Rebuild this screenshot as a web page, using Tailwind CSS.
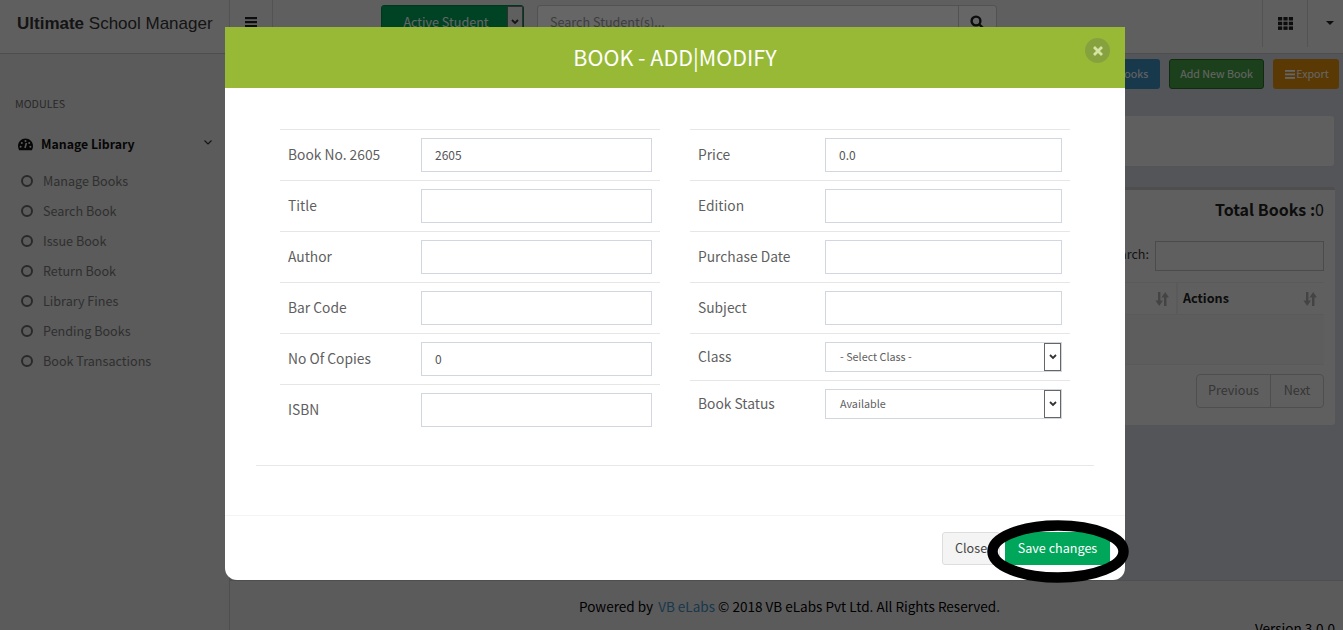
<!DOCTYPE html>
<html lang="en">
<head>
    <meta charset="UTF-8">
    <title>Ultimate School Manager</title>
    <script src="https://cdn.jsdelivr.net/npm/@tailwindcss/browser@4"></script>
</head>
<body class="bg-[#d3d4db]">
<div class="relative w-[1343px] h-[630px] overflow-hidden text-[12.6px] leading-[20px] text-[#333] font-['Noto_Sans_CJK_SC',sans-serif]">

    <!-- Top bar -->
    <header class="flex h-[54px] bg-[#eeeeee] border-b border-[#c4c4c4]">
        <div class="w-[229px] shrink-0 pl-[17px] pt-[14px] font-['Liberation_Sans',sans-serif] text-[17px] leading-[20px] text-[#333]"><b>Ultimate</b> School Manager</div>
        <div class="w-[44px] border-x border-[#cfcfcf] h-[48px] pl-[15px] pt-[16px] shrink-0">
            <svg class="w-[12px] h-[12px]" viewBox="0 0 12 12" fill="#222"><rect y="1" width="12" height="2.2"/><rect y="5" width="12" height="2.2"/><rect y="9" width="12" height="2.2"/></svg>
        </div>
        <div class="ml-[108px] mt-[5px] flex w-[143px] h-[34px] bg-[#00a65a] rounded-[3px] border border-[#008d4c]">
            <span class="flex-1 text-center pt-[6px] pl-[3px] text-white">Active Student</span>
            <span class="w-[16px] h-[32px] bg-[#eee] border border-[#777] flex items-center justify-center">
                <svg class="w-[8px] h-[6px]" viewBox="0 0 8 6" fill="none" stroke="#333" stroke-width="1.8"><path d="M1 1l3 3 3-3"/></svg>
            </span>
        </div>
        <div class="ml-[13px] mt-[5px] flex w-[460px] h-[34px] border border-[#ccc] rounded-[3px] bg-white">
            <span class="flex-1 pl-[12px] pt-[6px] text-[#999]">Search Student(s)...</span>
            <span class="w-[38px] border-l border-[#ccc] flex items-center justify-center">
                <svg class="w-[15px] h-[15px]" viewBox="0 0 15 15" fill="none" stroke="#222" stroke-width="2.4"><circle cx="6" cy="6" r="4.4"/><path d="M9.5 9.5l4.3 4.3"/></svg>
            </span>
        </div>
        <div class="ml-[265px] w-[46px] h-[47px] border-x border-[#cfcfcf] flex items-center justify-center">
            <svg class="w-[15px] h-[13px]" viewBox="0 0 15 13" fill="#222"><rect width="4.2" height="3.5"/><rect x="5.4" width="4.2" height="3.5"/><rect x="10.8" width="4.2" height="3.5"/><rect y="4.7" width="4.2" height="3.5"/><rect x="5.4" y="4.7" width="4.2" height="3.5"/><rect x="10.8" y="4.7" width="4.2" height="3.5"/><rect y="9.4" width="4.2" height="3.5"/><rect x="5.4" y="9.4" width="4.2" height="3.5"/><rect x="10.8" y="9.4" width="4.2" height="3.5"/></svg>
        </div>
        <div class="pl-[18px] pt-[21px]">
            <div class="w-0 h-0 border-x-[4px] border-x-transparent border-t-[4px] border-t-[#222]"></div>
        </div>
    </header>

    <div class="flex h-[576px]">
        <!-- Sidebar -->
        <aside class="w-[230px] shrink-0 bg-[#e3e3e3] border-r border-[#c4c4c4]">
            <div class="pl-[15px] pt-[42px] text-[10.7px] leading-[16px] text-[#666]">MODULES</div>
            <div class="flex items-center pl-[18px] pr-[17px] mt-[20px] h-[24px]">
                <svg class="w-[15px] h-[13px] mr-[8px]" viewBox="0 0 15 13"><path fill="#111" d="M7.5 0.5C3.4 0.5 0 3.8 0 8c0 1.6.5 3 1.2 4.3h12.6C14.500 11 15 9.6 15 8 15 3.800 11.6.5 7.5.5z"/><circle cx="7.5" cy="3" r="1" fill="#e3e3e3"/><circle cx="3.8" cy="5" r="1" fill="#e3e3e3"/><circle cx="11.2" cy="5" r="1" fill="#e3e3e3"/><circle cx="2.6" cy="8.8" r="1" fill="#e3e3e3"/><circle cx="12.4" cy="8.8" r="1" fill="#e3e3e3"/><path d="M7 10l1.4-5" stroke="#e3e3e3" stroke-width="1.6"/></svg>
                <span class="flex-1 text-[12.300px] font-semibold text-[#111]">Manage Library</span>
                <svg class="w-[8px] h-[5px] mb-[3px]" viewBox="0 0 8 5" fill="none" stroke="#333" stroke-width="1.2"><path d="M0.5 0.5L4 4l3.5-3.5"/></svg>
            </div>
            <ul class="mt-[10px] text-[#777]">
                <li class="flex items-center h-[30px] pl-[21px]"><span class="w-[12px] h-[12px] rounded-full border-2 border-[#666] mr-[10px]"></span>Manage Books</li>
                <li class="flex items-center h-[30px] pl-[21px]"><span class="w-[12px] h-[12px] rounded-full border-2 border-[#666] mr-[10px]"></span>Search Book</li>
                <li class="flex items-center h-[30px] pl-[21px]"><span class="w-[12px] h-[12px] rounded-full border-2 border-[#666] mr-[10px]"></span>Issue Book</li>
                <li class="flex items-center h-[30px] pl-[21px]"><span class="w-[12px] h-[12px] rounded-full border-2 border-[#666] mr-[10px]"></span>Return Book</li>
                <li class="flex items-center h-[30px] pl-[21px]"><span class="w-[12px] h-[12px] rounded-full border-2 border-[#666] mr-[10px]"></span>Library Fines</li>
                <li class="flex items-center h-[30px] pl-[21px]"><span class="w-[12px] h-[12px] rounded-full border-2 border-[#666] mr-[10px]"></span>Pending Books</li>
                <li class="flex items-center h-[30px] pl-[21px]"><span class="w-[12px] h-[12px] rounded-full border-2 border-[#666] mr-[10px]"></span>Book Transactions</li>
            </ul>
        </aside>

        <div class="flex-1 flex flex-col">
            <!-- Main content -->
            <main class="h-[526px] shrink-0 pl-[10px] pr-[9px]">
                <div class="flex justify-end gap-[9px] mt-[5px] mr-[-5px] text-[10.700px] text-white">
                    <span class="w-[100px] h-[30px] rounded-[3px] bg-[#3c8dbc] flex items-center justify-center pl-[4px]">Manage Books</span>
                    <span class="w-[95px] h-[30px] rounded-[3px] bg-[#479f47] border border-[#2d6a2d] flex items-center justify-center">Add New Book</span>
                    <span class="w-[66px] h-[30px] rounded-[3px] bg-[#e08e0b] flex items-center justify-center pl-[2px]">
                        <svg class="w-[10px] h-[9px] mr-[1px]" viewBox="0 0 10 9" fill="#fff"><rect width="10" height="1.8"/><rect y="3.5" width="10" height="1.8"/><rect y="7" width="10" height="1.8"/></svg>Export
                    </span>
                </div>
                <div class="h-[50px] mt-[27px] bg-[#eeeeee] rounded-[3px]"></div>
                <section class="h-[238px] mt-[21px] mr-[-1px] bg-[#eeeeee] border-t-[3px] border-[#c2c2c6] rounded-[3px] pr-[11px]">
                    <div class="text-right pt-[7px] text-[16px] leading-[24px] text-[#222]"><b>Total Books :</b><span class="font-normal">0</span></div>
                    <div class="flex justify-end items-center mt-[20px] gap-[6px]">
                        <span class="pb-[4px]">Search:</span>
                        <span class="w-[169px] h-[30px] border border-[#bbb] bg-[#eeeeee]"></span>
                    </div>
                    <div class="flex mt-[11px] h-[33px] border-y border-[#e2e2e2]">
                        <div class="flex-1 flex items-center justify-end pr-[7px] border-r-2 border-[#e2e2e2]">
                            <svg class="w-[14px] h-[14px]" viewBox="0 0 14 13" preserveAspectRatio="none" fill="#aaa"><path d="M3 0h2.4v8H8L4.2 13 .4 8H3zM9 5h-2.6L10.200 0 14 5h-2.500v8H9z"/></svg>
                        </div>
                        <div class="w-[146px] flex items-center justify-between pl-[5px] pr-[7px] font-bold text-[#222]"><span class="pb-[2px]">Actions</span>
                            <svg class="w-[14px] h-[14px]" viewBox="0 0 14 13" preserveAspectRatio="none" fill="#aaa"><path d="M3 0h2.4v8H8L4.2 13 .4 8H3zM9 5h-2.6L10.200 0 14 5h-2.500v8H9z"/></svg>
                        </div>
                    </div>
                    <div class="h-[50px] bg-[#e8e8e8] border-b border-[#e2e2e2]"></div>
                    <div class="flex justify-end mt-[9px]">
                        <div class="flex h-[34px] border border-[#c4c4c4] rounded-[4px] text-[#888]">
                            <span class="w-[74px] flex items-center justify-center border-r border-[#c4c4c4] pb-[2px]">Previous</span>
                            <span class="w-[52px] flex items-center justify-center pb-[2px]">Next</span>
                        </div>
                    </div>
                </section>
            </main>

            <!-- Footer -->
            <footer class="h-[50px] bg-[#e3e3e5] border-t border-[#c4c4c4] pt-[15px] text-[13.550px] text-black">
                <p class="pl-[349px] whitespace-nowrap">Powered by <span class="ml-[2px] text-[#3c8dbc]">VB eLabs</span> © 2018 VB eLabs Pvt Ltd. All Rights Reserved.</p>
                <p class="pl-[1025px] mt-[2px] whitespace-nowrap">Version 3.0.0</p>
            </footer>
        </div>
    </div>

    <!-- Modal backdrop -->
    <div class="absolute inset-0 bg-black/60"></div>

    <!-- Modal -->
    <div class="absolute left-[225px] top-[27px] w-[900px] h-[553px] bg-white rounded-b-[12px] flex flex-col">
        <div class="relative h-[61px] shrink-0 bg-[#97b936] flex items-center justify-center pb-[2px] text-white text-[21.500px] leading-[30px]">
            BOOK - ADD|MODIFY
            <span class="absolute right-[15px] top-[11px] w-[25px] h-[25px] rounded-full bg-[#86a23f] flex items-center justify-center">
                <svg class="w-[10px] h-[10px]" viewBox="0 0 10 10" stroke="#d5e3a3" stroke-width="2.800"><path d="M1 1l8 8M9 1l-8 8"/></svg>
            </span>
        </div>

        <div class="h-[378px] mx-[31px] border-b border-[#e8e8e8] pt-[41px] shrink-0 flex">
            <!-- Left column -->
            <div class="ml-[24px] w-[380px]">
                <div class="flex items-center h-[51px] border-t border-[#e6e6e6] pl-[8px] text-[13.800px] text-[#5f5f5f]"><span class="w-[133px] pb-[2px]">Book No. 2605</span><input value="2605" class="w-[231px] h-[34px] border border-[#d2d6de] px-[13px] pb-[2px] text-[12px] text-[#555]"></div>
                <div class="flex items-center h-[51px] border-t border-[#e6e6e6] pl-[8px] text-[13.800px] text-[#5f5f5f]"><span class="w-[133px] pb-[2px]">Title</span><input class="w-[231px] h-[34px] border border-[#d2d6de] px-[13px] text-[12px]"></div>
                <div class="flex items-center h-[51px] border-t border-[#e6e6e6] pl-[8px] text-[13.800px] text-[#5f5f5f]"><span class="w-[133px] pb-[2px]">Author</span><input class="w-[231px] h-[34px] border border-[#d2d6de] px-[13px] text-[12px]"></div>
                <div class="flex items-center h-[51px] border-t border-[#e6e6e6] pl-[8px] text-[13.800px] text-[#5f5f5f]"><span class="w-[133px] pb-[2px]">Bar Code</span><input class="w-[231px] h-[34px] border border-[#d2d6de] px-[13px] text-[12px]"></div>
                <div class="flex items-center h-[51px] border-t border-[#e6e6e6] pl-[8px] text-[13.800px] text-[#5f5f5f]"><span class="w-[133px] pb-[2px]">No Of Copies</span><input value="0" class="w-[231px] h-[34px] border border-[#d2d6de] px-[13px] pb-[2px] text-[12px] text-[#555]"></div>
                <div class="flex items-center h-[51px] border-t border-[#e6e6e6] pl-[8px] text-[13.800px] text-[#5f5f5f]"><span class="w-[133px] pb-[2px]">ISBN</span><input class="w-[231px] h-[34px] border border-[#d2d6de] px-[13px] text-[12px]"></div>
            </div>
            <!-- Right column -->
            <div class="ml-[30px] w-[380px]">
                <div class="flex items-center h-[51px] border-t border-[#e6e6e6] pl-[8px] text-[13.800px] text-[#5f5f5f]"><span class="w-[127px] pb-[2px]">Price</span><input value="0.0" class="w-[237px] h-[34px] border border-[#d2d6de] px-[13px] pb-[2px] text-[12px] text-[#555]"></div>
                <div class="flex items-center h-[51px] border-t border-[#e6e6e6] pl-[8px] text-[13.800px] text-[#5f5f5f]"><span class="w-[127px] pb-[2px]">Edition</span><input class="w-[237px] h-[34px] border border-[#d2d6de] px-[13px] text-[12px]"></div>
                <div class="flex items-center h-[51px] border-t border-[#e6e6e6] pl-[8px] text-[13.800px] text-[#5f5f5f]"><span class="w-[127px] pb-[2px]">Purchase Date</span><input class="w-[237px] h-[34px] border border-[#d2d6de] px-[13px] text-[12px]"></div>
                <div class="flex items-center h-[51px] border-t border-[#e6e6e6] pl-[8px] text-[13.800px] text-[#5f5f5f]"><span class="w-[127px] pb-[2px]">Subject</span><input class="w-[237px] h-[34px] border border-[#d2d6de] px-[13px] text-[12px]"></div>
                <div class="flex items-center h-[47px] border-t border-[#e6e6e6] pl-[8px] text-[13.800px] text-[#5f5f5f]"><span class="w-[127px] pb-[2px]">Class</span>
                    <div class="relative w-[237px] h-[30px] border border-[#d2d6de] pl-[14px] pb-[2px] flex items-center text-[10.800px]">- Select Class -
                        <span class="absolute right-0 top-0 w-[17px] h-[28px] border border-[#666] flex items-center justify-center"><svg class="w-[8px] h-[6px]" viewBox="0 0 8 6" fill="none" stroke="#333" stroke-width="1.800"><path d="M1 1l3 3 3-3"/></svg></span>
                    </div>
                </div>
                <div class="flex items-center h-[47px] border-t border-[#e6e6e6] pl-[8px] text-[13.800px] text-[#5f5f5f]"><span class="w-[127px] pb-[2px]">Book Status</span>
                    <div class="relative w-[237px] h-[30px] border border-[#d2d6de] pl-[14px] pb-[2px] flex items-center text-[10.800px]">Available
                        <span class="absolute right-0 top-0 w-[17px] h-[28px] border border-[#666] flex items-center justify-center"><svg class="w-[8px] h-[6px]" viewBox="0 0 8 6" fill="none" stroke="#333" stroke-width="1.800"><path d="M1 1l3 3 3-3"/></svg></span>
                    </div>
                </div>
            </div>
        </div>

        <div class="mt-[49px] flex-1 border-t border-[#f4f4f4] flex justify-end gap-[5px] pt-[16px] pr-[15px]">
            <button class="w-[58px] h-[33px] bg-[#f4f4f4] border border-[#ddd] rounded-[3px] text-[#444] text-left pl-[12px] pb-[2px]">Close</button>
            <button class="w-[105px] h-[33px] bg-[#00a65a] text-white pb-[2px]">Save changes</button>
        </div>
    </div>

    <!-- Hand-drawn highlight around the save button -->
    <svg class="absolute left-[985px] top-[518px] w-[146px] h-[68px]" viewBox="0 0 146 68" fill="none"><ellipse cx="73" cy="33.500" rx="65.500" ry="26" stroke="#000" stroke-width="10.500"/></svg>
</div>
</body>
</html>
